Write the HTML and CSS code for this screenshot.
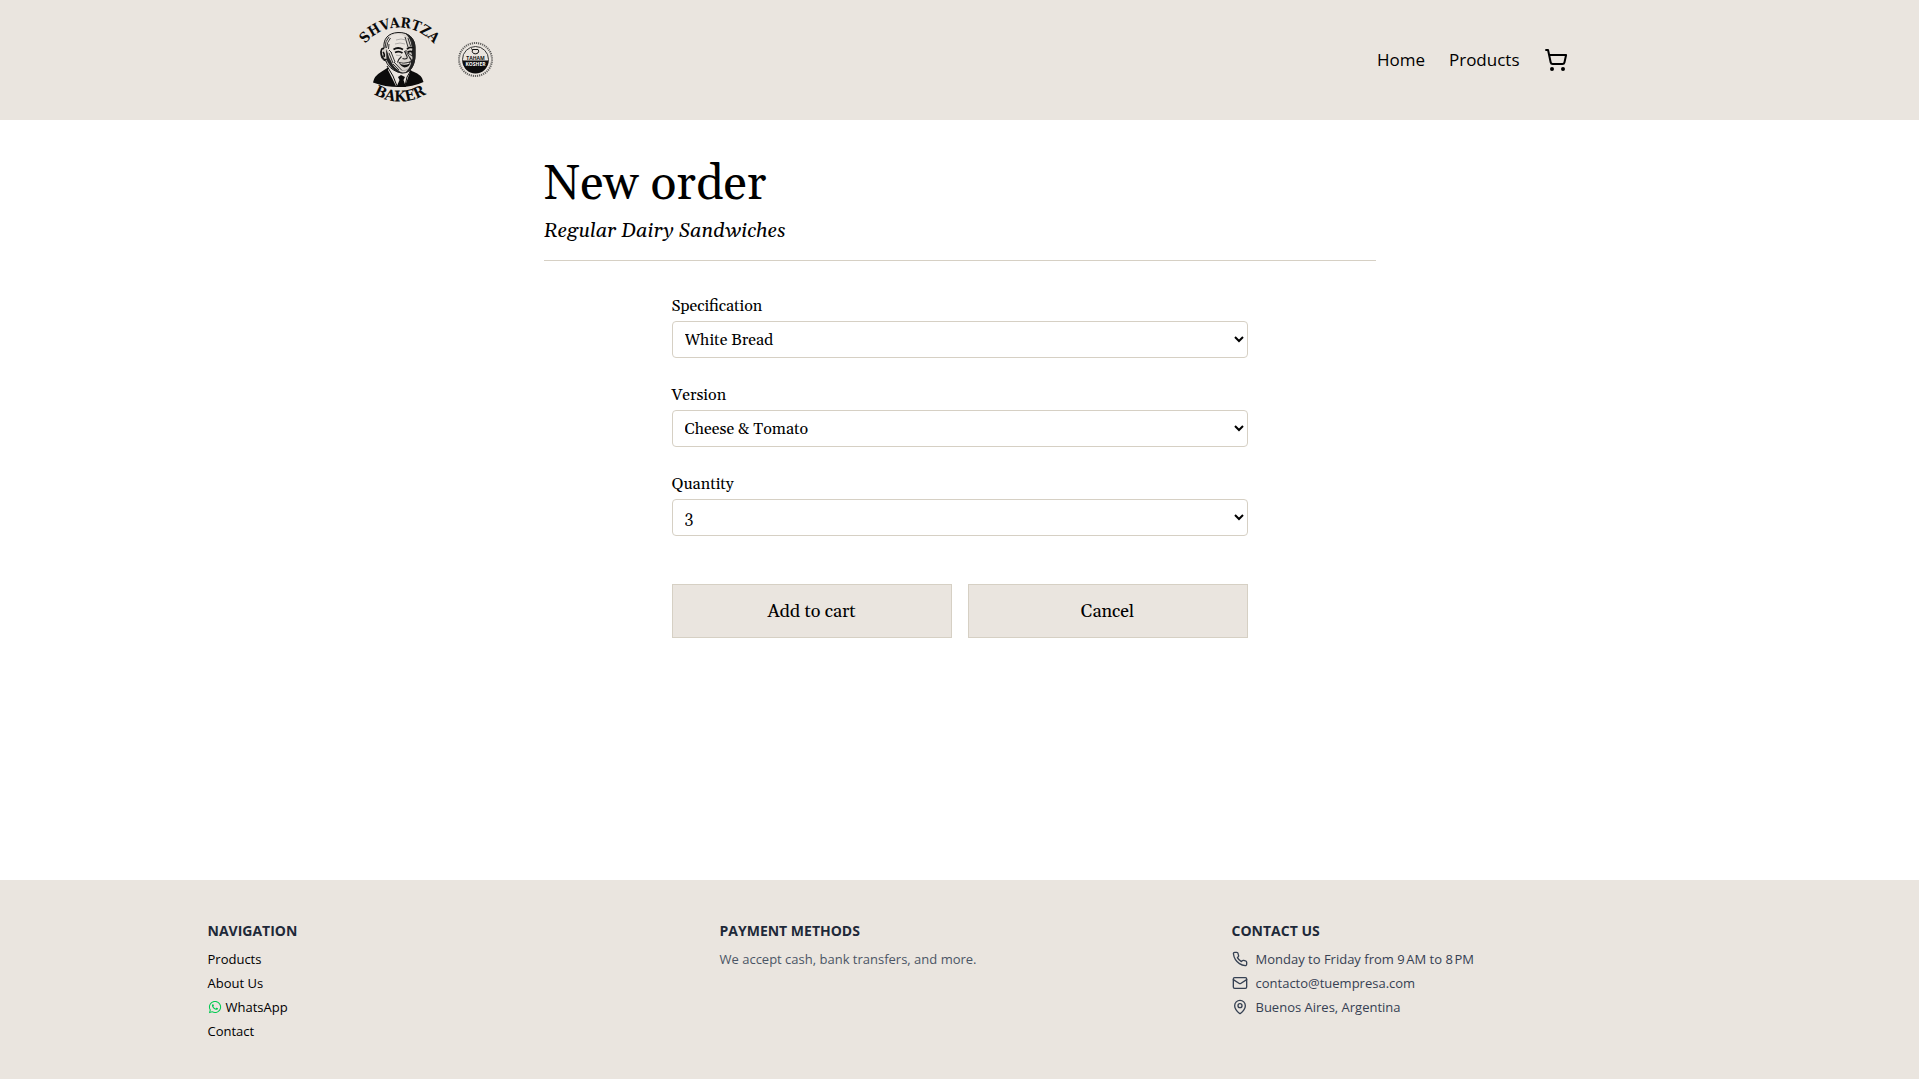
FILE: index.html
```html
<!DOCTYPE html>
<html lang="en">
<head>
<meta charset="utf-8">
<meta name="viewport" content="width=device-width, initial-scale=1">
<title>New order – Shvartza Baker</title>
<link rel="stylesheet" href="styles.css">
</head>
<body>
<header class="site-header">
  <div class="header-inner">
    <a class="brand" href="#" aria-label="Shvartza Baker home">
      <svg class="brand-logo" viewBox="2 2 96 96">
        <defs>
          <path id="arc-top" d="M13 37A44 44 0 0 1 86 37"/>
          <path id="arc-bottom" d="M20 81.500A50 50 0 0 0 80 81.500"/>
        </defs>
        <text class="logo-word"><textPath href="#arc-top" startOffset="50%">SHVARTZA</textPath></text>
        <!-- jacket -->
        <path d="M23 72.500Q24 66 31 62L38 57.500L48 68L59 60Q69 63 72 68L73.500 72Q63 77 49 77T23 72.500Z" fill="#0b0b0b"/>
        <!-- shirt and tie -->
        <path d="M38 56L38 60L46 76H55L60 62L57 58L50 66Z" fill="#eae5df"/>
        <path d="M48 67L51 65L55 67L53.500 70L56 77H46.500L49.500 70Z" fill="#0b0b0b"/>
        <path d="M37 56L43 66L47 76M61 60L57 67L55 76" fill="none" stroke="#0b0b0b"/>
        <!-- head -->
        <path d="M34 38C33 29 38 23 48 22.500C59 22 65 29 65 37L65 45C65 54 61 63 53 63C47 63 38 58 36 51Q31 50 31 44Q31 38 34 38Z" fill="#d8d3cd" stroke="#191919"/>
        <path d="M36 37C36 29 40 24.500 47 24C54 24 57 28 57 34L55 45L50 51L46 55L42 50L40 43Z" fill="#eae5df"/>
        <path d="M34 39C32 37 30 41 31.500 45S35 51 36.500 49M33 42Q35 44 34 47" fill="none" stroke="#111" stroke-width="1.600"/>
        <!-- shading on both sides of the face -->
        <path d="M54 22.700C62 25 65.500 31 65.500 38V46C65.500 53 62 62 55 63C60 58 61 54 62.500 48L61.500 43L62.500 38C61 31 59 26 54 22.700Z" fill="#222"/>
        <path d="M36 39L36.500 50C40 57 45 63 53 63.500C48 60 43 57 41 51C38 47 38.500 43 36 39Z" fill="#222"/>
        <path d="M55 27L58 37M58 28L60.500 36M61 30L62 36M39 43L43 53M41 42L45 52M43 54L49 60M44 52L52 60.500M56 40V43M57 43L60 48M58 43L62 46M39 40L42 43" fill="none" stroke="#333"/>
        <!-- brows, eyes, nose and smile -->
        <path d="M43.500 39.500Q48 36.500 53 39.500M57 39Q60 36.500 63.500 38" fill="none" stroke="#111" stroke-width="1.800"/>
        <path d="M45 42.500Q49 40.500 52.500 43M57.500 42.500Q60 40.500 62.500 42" fill="none" stroke="#111" stroke-width="1.700"/>
        <path d="M54.500 41L57 46.500Q58 49 54.500 49L52.500 48.500M51.500 46.500Q48.500 49 47.500 52.500M59.500 47.500Q62 49.500 61.500 53" fill="none" stroke="#222" stroke-width="1.100"/>
        <path d="M48.500 52Q55 54 61 51Q59.500 57.500 54.500 57.500Q51 56.500 48.500 52Z" fill="#111"/>
        <path d="M50.500 53.500Q55 55 59.500 53" fill="none" stroke="#eae5df" stroke-width="1.200"/>
        <path d="M46 30Q51 28 56 30M45 34Q50 32 55 34M52 60.500Q55 61 58 59M46 45Q49 46 51 45" fill="none" stroke="#888" stroke-width=".6"/>
        <path d="M35 38Q35 31 39 27M36.500 38Q37 32 40.500 28M38.500 39L39 34" fill="none" stroke="#333"/>
        <text class="logo-word logo-word-bottom"><textPath href="#arc-bottom" startOffset="50%">BAKER</textPath></text>
      </svg>
      <svg class="brand-badge" viewBox="0 0 40 40">
        <circle cx="19.500" cy="19.500" r="16.500" fill="none" stroke="#333" stroke-width="2" stroke-dasharray="1.200 .9" opacity=".75"/>
        <circle cx="19.500" cy="19.500" r="13" fill="none" stroke="#222" stroke-width=".9"/>
        <path d="M6.500 20.500H32.500A13 13 0 0 1 6.500 20.500Z" fill="#0d0d0d"/>
        <path d="M15 8.500L16.500 9.500H22Q23.500 11 22 13Q20 14.500 17.500 13.500Q15.500 12 16.500 9.500" fill="none" stroke="#111"/>
        <text class="badge-word" x="19.500" y="19.500">TAHAM</text>
        <text class="badge-word badge-word-light" x="19.500" y="26">KOSHER</text>
      </svg>
    </a>
    <nav class="main-nav">
      <a href="#">Home</a>
      <a href="#">Products</a>
      <a class="cart-link" href="#" aria-label="Cart">
        <svg class="icon cart-icon" viewBox="0 0 24 24"><circle cx="8" cy="21" r="1"/><circle cx="19" cy="21" r="1"/><path d="M2.050 2.050h2l2.660 12.420a2 2 0 0 0 2 1.580h9.780a2 2 0 0 0 1.950-1.570l1.650-7.430H5.120"/></svg>
      </a>
    </nav>
  </div>
</header>

<main class="order">
  <div class="order-heading">
    <h1>New order</h1>
    <p>Regular Dairy Sandwiches</p>
  </div>
  <form class="order-form">
    <div class="field">
      <label for="specification">Specification</label>
      <select id="specification"><option>White Bread</option></select>
    </div>
    <div class="field">
      <label for="version">Version</label>
      <select id="version"><option>Cheese &amp; Tomato</option></select>
    </div>
    <div class="field">
      <label for="quantity">Quantity</label>
      <select id="quantity"><option>3</option></select>
    </div>
    <div class="actions">
      <button type="button">Add to cart</button>
      <button type="button">Cancel</button>
    </div>
  </form>
</main>

<footer class="site-footer">
  <div class="footer-grid">
    <section>
      <h2>NAVIGATION</h2>
      <ul class="footer-list footer-links">
        <li><a href="#">Products</a></li>
        <li><a href="#">About Us</a></li>
        <li><a class="whatsapp" href="#"><svg class="whatsapp-icon" viewBox="0 0 448 512"><path d="M380.900 97.100C339 55.100 283.200 32 223.900 32c-122.400 0-222 99.600-222 222 0 39.100 10.200 77.300 29.600 111L0 480l117.700-30.900c32.400 17.700 68.900 27 106.100 27h.1c122.300 0 224.100-99.600 224.100-222 0-59.300-25.200-115-67.100-157zm-157 341.600c-33.200 0-65.700-8.900-94-25.700l-6.700-4-69.800 18.300L72 359.200l-4.400-7c-18.500-29.400-28.200-63.300-28.200-98.200 0-101.700 82.800-184.500 184.600-184.500 49.300 0 95.600 19.200 130.400 54.100 34.800 34.900 56.200 81.200 56.100 130.500 0 101.800-84.900 184.600-186.600 184.600zm101.200-138.200c-5.500-2.800-32.800-16.200-37.900-18-5.100-1.900-8.800-2.800-12.500 2.800-3.700 5.600-14.300 18-17.600 21.800-3.200 3.700-6.500 4.200-12 1.400-32.600-16.300-54-29.100-75.500-66-5.700-9.800 5.700-9.100 16.300-30.300 1.800-3.700.9-6.900-.5-9.700-1.400-2.800-12.500-30.100-17.100-41.200-4.500-10.800-9.100-9.300-12.500-9.500-3.200-.2-6.900-.2-10.600-.2-3.700 0-9.700 1.400-14.800 6.900-5.100 5.600-19.400 19-19.400 46.300 0 27.300 19.900 53.700 22.600 57.400 2.800 3.700 39.100 59.700 94.800 83.800 35.200 15.200 49 16.500 66.600 13.900 10.700-1.600 32.800-13.400 37.400-26.400 4.600-13 4.600-24.100 3.200-26.400-1.300-2.500-5-3.900-10.500-6.600z"/></svg>WhatsApp</a></li>
        <li><a href="#">Contact</a></li>
      </ul>
    </section>
    <section>
      <h2>PAYMENT METHODS</h2>
      <p class="payment-note">We accept cash, bank transfers, and more.</p>
    </section>
    <section>
      <h2>CONTACT US</h2>
      <ul class="footer-list contact-list">
        <li><svg class="icon" viewBox="0 0 24 24"><path d="M22 16.920v3a2 2 0 0 1-2.180 2 19.790 19.790 0 0 1-8.630-3.070 19.500 19.500 0 0 1-6-6 19.790 19.790 0 0 1-3.070-8.670A2 2 0 0 1 4.110 2h3a2 2 0 0 1 2 1.720c.127.960.361 1.903.7 2.810a2 2 0 0 1-.450 2.110L8.090 9.910a16 16 0 0 0 6 6l1.270-1.270a2 2 0 0 1 2.110-.450c.907.339 1.850.573 2.810.7A2 2 0 0 1 22 16.920z"/></svg>Monday to Friday from 9&#8239;AM to 8&#8239;PM</li>
        <li><svg class="icon" viewBox="0 0 24 24"><rect x="2" y="4" width="20" height="16" rx="2"/><path d="m22 7-8.970 5.700a1.940 1.940 0 0 1-2.060 0L2 7"/></svg>contacto@tuempresa.com</li>
        <li><svg class="icon" viewBox="0 0 24 24"><path d="M20 10c0 4.993-5.539 10.193-7.399 11.799a1 1 0 0 1-1.202 0C9.539 20.193 4 14.993 4 10a8 8 0 0 1 16 0"/><circle cx="12" cy="10" r="3"/></svg>Buenos Aires, Argentina</li>
      </ul>
    </section>
  </div>
</footer>
</body>
</html>
```
FILE: styles.css
```css
:root {
  --sand: #eae5df;
  --line: #d6d0c4;
  --serif: Georgia, Gelasio, "Liberation Serif", serif;
  --sans: "Segoe UI", "Open Sans", sans-serif;
}

* {
  box-sizing: border-box;
  margin: 0;
  padding: 0;
}

body {
  display: flex;
  flex-direction: column;
  min-height: 100vh;
  background: #fff;
  color: #000;
  font-family: var(--sans);
}

a {
  color: inherit;
  text-decoration: none;
}

.icon {
  width: 16px;
  height: 16px;
  flex: none;
  fill: none;
  stroke: currentColor;
  stroke-width: 2;
  stroke-linecap: round;
  stroke-linejoin: round;
}

/* Header */
.site-header {
  background: var(--sand);
}

.header-inner {
  display: flex;
  align-items: center;
  justify-content: space-between;
  max-width: 1280px;
  margin: 0 auto;
  padding: 12px 32px;
}

.brand {
  display: flex;
  align-items: center;
  gap: 8px;
}

.brand-logo {
  width: 96px;
  height: 96px;
}

.brand-badge {
  width: 40px;
  height: 40px;
}

.logo-word {
  font: bold 14px "DejaVu Serif Condensed", "DejaVu Serif", serif;
  text-anchor: middle;
  fill: #0b0b0b;
}

.logo-word-bottom {
  font-size: 15px;
}

.badge-word {
  font: bold 5px "Open Sans", sans-serif;
  text-anchor: middle;
  fill: #111;
}

.badge-word-light {
  fill: #fff;
}

.main-nav {
  display: flex;
  align-items: center;
  gap: 24px;
  font-size: 17px;
  line-height: 28px;
}

.cart-link {
  display: flex;
}

.cart-icon {
  width: 24px;
  height: 24px;
}

/* Order form */
.order {
  flex: 1;
  width: 100%;
  max-width: 896px;
  margin: 0 auto;
  padding: 33px 32px 32px;
  font-family: var(--serif);
}

.order-heading {
  padding-bottom: 15px;
  border-bottom: 1px solid var(--line);
}

.order-heading h1 {
  font-size: 48px;
  font-weight: 400;
  line-height: 64px;
}

.order-heading p {
  font-size: 20px;
  font-style: italic;
  line-height: 28px;
}

.order-form {
  max-width: 576px;
  margin: 33px auto 0;
}

.field {
  display: flex;
  flex-direction: column;
  margin-bottom: 24px;
}

.field label {
  margin-bottom: 3px;
  font-size: 16px;
  line-height: 24px;
}

.field + .field label {
  padding-top: 1px;
}

.field select {
  width: 100%;
  height: 37px;
  padding: 0 8px;
  border: 1px solid var(--line);
  border-radius: 4px;
  background: #fff;
  color: #000;
  font: 16px var(--serif);
}

.actions {
  display: grid;
  grid-template-columns: 1fr 1fr;
  gap: 16px;
  margin-top: 48px;
}

.actions button {
  height: 54px;
  border: 1px solid var(--line);
  background: var(--sand);
  color: #000;
  font: 18px var(--serif);
}

/* Footer */
.site-footer {
  padding: 41px 0 38px;
  background: var(--sand);
  color: #364153;
  font-size: 13px;
  line-height: 20px;
}

.footer-grid {
  display: grid;
  grid-template-columns: repeat(3, 1fr);
  gap: 32px;
  max-width: 1536px;
  margin: 0 auto;
  padding: 0 16px;
}

.footer-grid h2 {
  margin-bottom: 8px;
  color: #1e2939;
  font-size: 14px;
  font-weight: 700;
}

.footer-list {
  display: flex;
  flex-direction: column;
  gap: 4px;
  list-style: none;
}

.footer-links {
  color: #000;
}

.whatsapp {
  display: flex;
  align-items: center;
  gap: 4px;
}

.whatsapp-icon {
  width: 14px;
  height: 14px;
  fill: #00c950;
}

.payment-note {
  color: #4a5565;
}

.contact-list li {
  display: flex;
  align-items: center;
  gap: 8px;
}
```
